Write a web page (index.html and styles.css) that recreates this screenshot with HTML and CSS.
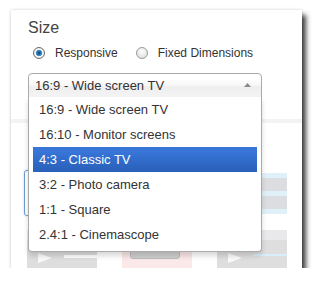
FILE: index.html
```html
<!DOCTYPE html>
<html lang="en">
<head>
    <meta charset="UTF-8">
    <title>Size</title>
    <link rel="stylesheet" href="styles.css">
</head>
<body>
    <div class="panel">
        <div class="title">Size</div>
        <div class="options">
            <label class="opt"><span class="radio checked"></span>Responsive</label>
            <label class="opt"><span class="radio"></span>Fixed Dimensions</label>
        </div>

        <div class="chosen">
            <div class="single">
                <span>16:9 - Wide screen TV</span>
                <svg class="arrow" width="7" height="4" viewBox="0 0 7 4"><path d="M0 4 L3.5 0 L7 4 Z" fill="#8a8a8a"/></svg>
            </div>
            <ul class="drop">
                <li>16:9 - Wide screen TV</li>
                <li>16:10 - Monitor screens</li>
                <li class="active">4:3 - Classic TV</li>
                <li>3:2 - Photo camera</li>
                <li>1:1 - Square</li>
                <li>2.4:1 - Cinemascope</li>
            </ul>
        </div>

        <div class="divider"></div>

        <div class="row">
            <div class="code"></div>
            <div class="stripes">
                <div class="s blue"></div>
                <div class="s grey"></div>
                <div class="s blue"></div>
                <div class="s grey"></div>
                <div class="s blue"></div>
            </div>
        </div>

        <div class="thumbs">
            <div class="thumb">
                <div class="thumb-top"></div>
                <div class="play"></div>
                <div class="bar"></div>
            </div>
            <div class="thumb pink">
                <div class="thumb-top"></div>
                <div class="btn"></div>
            </div>
            <div class="thumb">
                <div class="thumb-top"></div>
                <div class="play"></div>
                <div class="line"></div>
            </div>
        </div>
    </div>
</body>
</html>
```

FILE: styles.css
```css
body {
    margin: 0;
    background: #fff;
    font-family: "Liberation Sans", Arial, sans-serif;
    color: #333;
}
.panel {
    position: relative;
    width: 291px;
    height: 258px;
    margin: 10px 0 0 11px;
    padding-top: 9px;
    box-sizing: border-box;
    background: #fff;
    overflow: hidden;
    box-shadow: 4px 5px 5px rgba(0, 0, 0, 0.75), 0 0 3px rgba(0, 0, 0, 0.18);
}
.title {
    margin-left: 17px;
    font-size: 16px;
    line-height: 18px;
    color: #444;
}
.options {
    display: flex;
    gap: 18px;
    margin: 8px 0 0 22px;
    font-size: 12px;
    line-height: 16px;
}
.opt {
    display: flex;
    align-items: center;
    gap: 10px;
}
.radio {
    width: 12px;
    height: 12px;
    box-sizing: border-box;
    border-radius: 50%;
    border: 1px solid #9a9a9a;
    background: radial-gradient(circle at 50% 35%, #fdfdfd, #d9d9d9);
}
.radio.checked {
    border-color: #6b6b6b;
    background: radial-gradient(circle at 50% 50%, #0d3c63 0, #2a78b8 2px, #4d9bd6 3px, #fff 3.6px, #e6e6e6 5px);
}

/* opened select */
.chosen {
    position: relative;
    width: 234px;
    margin: 12px 0 0 17px;
    font-size: 13px;
    color: #333;
}
.single {
    height: 25px;
    box-sizing: border-box;
    display: flex;
    align-items: center;
    justify-content: space-between;
    padding: 0 10px 0 6px;
    border: 1px solid #aaa;
    border-radius: 4px 4px 0 0;
    background: linear-gradient(#fff 20%, #f6f6f6 50%, #eee 52%, #f4f4f4 100%);
}
.arrow {
    margin-bottom: 1px;
}
.drop {
    position: absolute;
    top: 24px;
    left: 0;
    right: 0;
    z-index: 2;
    margin: 0;
    padding: 0 4px 4px 4px;
    list-style: none;
    background: #fff;
    border: 1px solid #aaa;
    border-top: 0;
    border-radius: 0 0 4px 4px;
    box-shadow: 0 4px 5px rgba(0, 0, 0, 0.15);
}
.drop li {
    height: 25px;
    line-height: 25px;
    padding: 0 6px;
}
.drop li.active {
    color: #fff;
    background: linear-gradient(#3875d7 20%, #2a62bc 90%);
}

/* page content under the dropdown */
.divider {
    height: 4px;
    margin-top: 21px;
    background: #f3f3f3;
}
.row {
    display: flex;
    justify-content: space-between;
    align-items: flex-start;
    margin-top: 47px;
    padding: 0 15px 0 13px;
}
.code {
    width: 200px;
    height: 46px;
    box-sizing: border-box;
    border: 1px solid #6f9ad0;
    border-radius: 3px;
    box-shadow: 0 0 2px #aac8ec;
}
.stripes {
    width: 25px;
    margin-top: 3px;
}
.s.blue { height: 5px; background: #dff0f8; }
.s.grey { height: 13px; background: #dcdde0; }

.thumbs {
    display: flex;
    gap: 25px;
    margin-top: 14px;
    padding-left: 16px;
}
.thumb {
    position: relative;
    width: 70px;
    height: 40px;
    background: #dedede;
}
.thumb-top {
    height: 10px;
    background: #e9e9ec;
}
.thumb.pink {
    background: #fbe8e8;
}
.thumb.pink .thumb-top {
    background: #f6eeee;
}
.play {
    position: absolute;
    left: 11px;
    top: 23px;
    width: 0;
    height: 0;
    border-top: 5px solid transparent;
    border-bottom: 5px solid transparent;
    border-left: 14px solid #fafafa;
}
.bar {
    position: absolute;
    left: 37px;
    top: 25px;
    width: 33px;
    height: 3px;
    background: #fff;
}
.btn {
    position: absolute;
    left: 8px;
    top: 11px;
    width: 48px;
    height: 16px;
    border-radius: 3px;
    background: #d0d0d0;
    border: 1px solid #bdbdbd;
}
.line {
    position: absolute;
    left: 36px;
    top: 24px;
    width: 34px;
    height: 2px;
    background: #d8eefa;
}
```
